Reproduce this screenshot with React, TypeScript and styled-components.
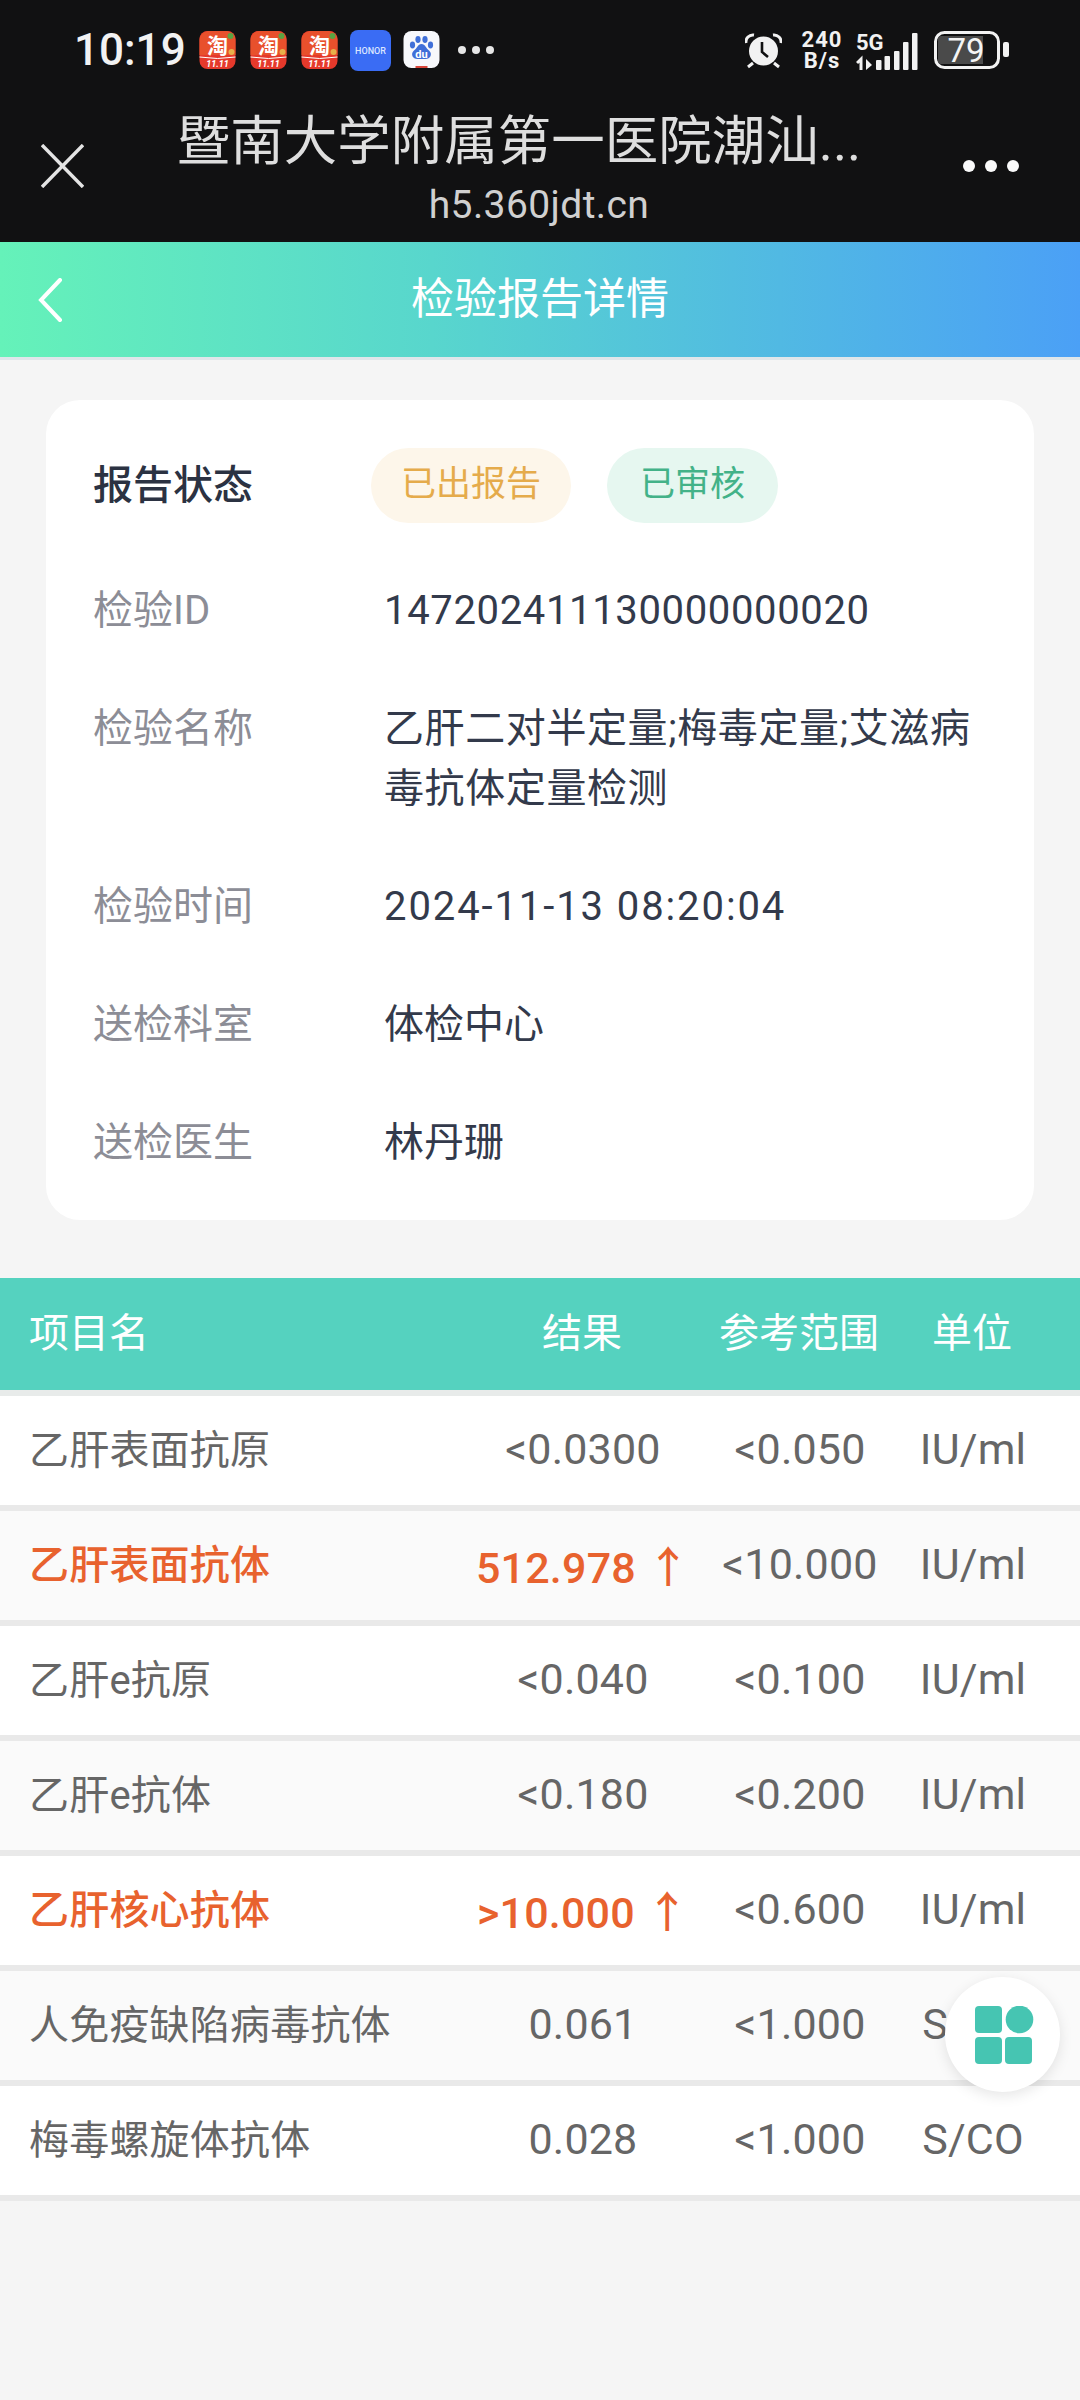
import React from "react";
import styled, { createGlobalStyle } from "styled-components";

const Global = createGlobalStyle`
  html, body { margin: 0; padding: 0; background: #f5f5f5; }
  * { box-sizing: border-box; }
  body { font-family: Roboto, "Noto Sans CJK SC", sans-serif; }
`;

const Page = styled.div`
  position: relative;
  width: 1080px;
  height: 2400px;
  overflow: hidden;
  background: #f5f5f5;
`;

const Chrome = styled.header`
  height: 242px;
  background: #111112;
`;

const StatusBar = styled.div`
  height: 100px;
  padding: 0 71px 0 74px;
  display: flex;
  align-items: center;
  color: #f2f2f2;
`;

const Clock = styled.span`
  font-size: 44px;
  font-weight: 500;
  width: 125px;
  line-height: 1;
`;

const NoticeIcons = styled.div`
  display: flex;
  align-items: center;
  gap: 14px;
`;

const AppGlyph = styled.svg`
  display: block;
  flex: none;
`;

const HonorGlyph = styled(AppGlyph)`
  margin: 0 -2px;
`;

const MoreNotices = styled.span`
  display: flex;
  gap: 6px;
  margin-left: 4px;
`;

const TinyDot = styled.i`
  width: 8px;
  height: 8px;
  border-radius: 50%;
  background: #e6e6e6;
`;

const SystemIcons = styled.div`
  margin-left: auto;
  display: flex;
  align-items: center;
`;

const Speed = styled.div`
  width: 42px;
  margin-left: 19px;
  display: flex;
  flex-direction: column;
  align-items: center;
  font-size: 22px;
  font-weight: 700;
  line-height: 21px;
  letter-spacing: 1px;
  color: #f2f2f2;
`;

const SignalGlyph = styled(AppGlyph)`
  margin-left: 13px;
`;

const BatteryGlyph = styled(AppGlyph)`
  margin-left: 16px;
`;

const NavBar = styled.div`
  height: 142px;
  display: flex;
  align-items: flex-start;
`;

const CloseBox = styled.div`
  width: 124px;
  padding: 44px 0 0 41px;
  flex: none;
`;

const NavTitles = styled.div`
  width: 812px;
  display: flex;
  flex-direction: column;
  align-items: center;
`;

const NavTitle = styled.div`
  margin: 11px 0 0 -22px;
  font-size: 53.5px;
  line-height: 62px;
  color: #dedede;
  white-space: nowrap;
`;

const NavUrl = styled.div`
  margin: 10px 0 0 18px;
  font-size: 39px;
  line-height: 44px;
  letter-spacing: 0.4px;
  color: #d0d0d0;
`;

const NavMenu = styled.div`
  display: flex;
  gap: 10px;
  padding: 60px 0 0 27px;
`;

const NavDot = styled.i`
  width: 12px;
  height: 12px;
  border-radius: 50%;
  background: #fafafa;
`;

const HeadBar = styled.div`
  height: 118px;
  border-bottom: 3px solid #dfe6ea;
  background: linear-gradient(90deg, #65f2b9 0%, #58d6cd 40%, #4ba0f6 100%);
  display: grid;
  grid-template-columns: 100px 1fr 100px;
  align-items: center;
  color: #fff;
`;

const BackBox = styled.div`
  padding: 0 0 0 37px;
  display: flex;
`;

const HeadTitle = styled.h1`
  margin: 0 0 2px;
  font-size: 43px;
  font-weight: 400;
  text-align: center;
  line-height: 56px;
`;

const Card = styled.section`
  margin: 40px 46px 0 46px;
  padding: 48px 32px 48px 47px;
  height: 820px;
  background: #fff;
  border-radius: 34px;
  display: flex;
  flex-direction: column;
  gap: 58px;
`;

const InfoRow = styled.div`
  display: grid;
  grid-template-columns: 291px 1fr;
  align-items: start;
  font-size: 40px;
  line-height: 60px;
`;

const StatusRow = styled(InfoRow)`
  align-items: center;
  height: 75px;
  margin-bottom: 0;
`;

const InfoLabel = styled.div<{ $strong?: boolean }>`
  color: ${(p) => (p.$strong ? "#2b3242" : "#8c8d96")};
  font-weight: ${(p) => (p.$strong ? 500 : 400)};
`;

const InfoValue = styled.div<{ $spacing: number }>`
  color: #333a4b;
  letter-spacing: ${(p) => p.$spacing}px;
`;

const Pills = styled.div`
  display: flex;
  gap: 36px;
  margin-left: -13px;
`;

const Pill = styled.span<{ $tone: "amber" | "green" }>`
  height: 75px;
  padding: 0 ${(p) => (p.$tone === "amber" ? 30 : 33)}px 2px;
  border-radius: 38px;
  display: flex;
  align-items: center;
  font-size: 35px;
  background: ${(p) => (p.$tone === "amber" ? "#fdf6ea" : "#e6f7f0")};
  color: ${(p) => (p.$tone === "amber" ? "#e5ab4b" : "#43b288")};
`;

const Columns = `
  display: grid;
  grid-template-columns: 434px 240px 194px 152px;
  padding-left: 29px;
  align-items: center;
`;

const TableHead = styled.div`
  ${Columns}
  margin-top: 58px;
  height: 112px;
  padding-bottom: 8px;
  background: #55d2bf;
  color: #fff;
  font-size: 40px;
`;

const HeadCell = styled.div`
  text-align: center;
  white-space: nowrap;
  margin-left: -2px;
`;

const Rows = styled.div`
  border-top: 6px solid #e8ebea;
`;

const Row = styled.div<{ $alt: boolean }>`
  ${Columns}
  height: 115px;
  padding-bottom: 8px;
  border-bottom: 6px solid #e9e9e9;
  background: ${(p) => (p.$alt ? "#fafafa" : "#fff")};
  color: #666;
  font-size: 40px;
`;

const Name = styled.div<{ $alert?: boolean }>`
  color: ${(p) => (p.$alert ? "#e8622e" : "#666")};
  font-weight: ${(p) => (p.$alert ? 500 : 400)};
  letter-spacing: 0.2px;
`;

const Cell = styled.div<{ $alert?: boolean }>`
  margin-top: 5px;
  text-align: center;
  white-space: nowrap;
  font-size: 43px;
  color: ${(p) => (p.$alert ? "#e8622e" : "#666")};
  font-weight: ${(p) => (p.$alert ? 500 : 400)};
  letter-spacing: 0.2px;
`;

const Fab = styled.button`
  position: absolute;
  left: 945px;
  top: 1977px;
  width: 115px;
  height: 115px;
  padding: 0 0 0 5px;
  border: 0;
  border-radius: 50%;
  background: #fff;
  box-shadow: 0 4px 14px rgba(0, 0, 0, 0.1);
  display: flex;
  align-items: center;
  justify-content: center;
`;

const Taobao = () => (
  <AppGlyph width="37" height="38" viewBox="0 0 36 38">
    <rect width="36" height="38" rx="8" fill="#e5392b" />
    <path d="M0 9a9 9 0 0 1 9-9h18a9 9 0 0 1 9 9v15H0z" fill="#e8502c" />
    <circle cx="31" cy="5" r="3" fill="#5aa342" />
    <circle cx="32" cy="21" r="3" fill="#e7b04a" />
    <text x="18" y="22" textAnchor="middle" fontSize="21" fontWeight="700" fill="#fff">淘</text>
    <path d="M0 26q18 3 36 0" stroke="#fff" strokeWidth="1" fill="none" />
    <text x="18" y="35.5" textAnchor="middle" fontSize="9" fontWeight="700" fontStyle="italic" fill="#fff">11.11</text>
  </AppGlyph>
);

const Honor = () => (
  <HonorGlyph width="41" height="41" viewBox="0 0 41 41">
    <rect width="41" height="41" rx="8" fill="#3a6cf4" />
    <text x="20.5" y="24" textAnchor="middle" fontSize="9" fontWeight="500" fill="#dce6ff">HONOR</text>
  </HonorGlyph>
);

const Baidu = () => (
  <AppGlyph width="37" height="38" viewBox="0 0 36 38">
    <rect width="36" height="37" rx="8" fill="#f7f8fb" />
    <g fill="#3f6fd8">
      <ellipse cx="9" cy="14" rx="2.6" ry="3.4" />
      <ellipse cx="14.5" cy="8.5" rx="2.6" ry="3.4" />
      <ellipse cx="21.5" cy="8.5" rx="2.6" ry="3.4" />
      <ellipse cx="27" cy="14" rx="2.6" ry="3.4" />
      <path d="M18 13c4 0 4 4 8 7 3 3 1 8-4 8H14c-5 0-7-5-4-8 4-3 4-7 8-7z" />
    </g>
    <text x="18" y="27" textAnchor="middle" fontSize="11" fontWeight="700" fill="#fff">du</text>
    <rect x="12" y="35" width="12" height="2" fill="#d8453a" />
  </AppGlyph>
);

const Alarm = () => (
  <AppGlyph width="37" height="38" viewBox="0 0 37 38">
    <circle cx="18.5" cy="20" r="14.5" fill="#f2f2f2" />
    <path d="M1 12a7 7 0 0 1 8-8M36 12a7 7 0 0 0-8-8" stroke="#f2f2f2" strokeWidth="3" fill="none" />
    <path d="M8 32l-5 4M29 32l5 4" stroke="#f2f2f2" strokeWidth="3" />
    <path d="M17 11v10l6 5" stroke="#111112" strokeWidth="2.6" fill="none" />
  </AppGlyph>
);

const Signal = () => (
  <SignalGlyph width="62" height="42" viewBox="0 -4 62 42">
    <text x="0" y="17" fontSize="22" fontWeight="700" fill="#f2f2f2">5G</text>
    <path d="M5 37V26l-4 4" stroke="#f2f2f2" strokeWidth="3" fill="none" />
    <path d="M10 26v11l6-5z" fill="#f2f2f2" />
    <rect x="20" y="27" width="5.5" height="10" rx="1" fill="#f2f2f2" />
    <rect x="28.5" y="23" width="5.5" height="14" rx="1" fill="#f2f2f2" />
    <rect x="38" y="18" width="5.5" height="19" rx="1" fill="#f2f2f2" />
    <rect x="47" y="9" width="5.5" height="28" rx="1" fill="#f2f2f2" />
    <rect x="56" y="0" width="5.5" height="37" rx="1" fill="#f2f2f2" />
  </SignalGlyph>
);

const Battery = () => (
  <BatteryGlyph width="75" height="38" viewBox="0 0 75 38">
    <rect x="1.5" y="1.5" width="63" height="35" rx="9" fill="none" stroke="#f2f2f2" strokeWidth="3" />
    <path d="M7 5h42v28H7a3 3 0 0 1-3-3V8a3 3 0 0 1 3-3z" fill="#4a4a4a" />
    <rect x="69" y="11" width="6" height="15" rx="2" fill="#f2f2f2" />
    <text x="32" y="31" textAnchor="middle" fontSize="33" fill="#f5f5f5">79</text>
  </BatteryGlyph>
);

const CloseIcon = () => (
  <AppGlyph width="43" height="44" viewBox="0 0 43 44">
    <path d="M1 1l41 42M42 1L1 43" stroke="#e4e4e4" strokeWidth="3.4" fill="none" />
  </AppGlyph>
);

const BackIcon = () => (
  <AppGlyph width="26" height="44" viewBox="0 0 26 44">
    <path d="M23 2L4 22l19 20" stroke="#fff" strokeWidth="4" fill="none" strokeLinecap="round" />
  </AppGlyph>
);

const AppsIcon = () => (
  <AppGlyph width="60" height="58" viewBox="0 0 60 58">
    <rect x="0" y="0" width="27" height="27" rx="4" fill="#46c5b2" />
    <circle cx="44.5" cy="13.5" r="13.8" fill="#46c5b2" />
    <rect x="0" y="31" width="27" height="27" rx="4" fill="#46c5b2" />
    <rect x="30" y="31" width="27" height="27" rx="4" fill="#46c5b2" />
  </AppGlyph>
);

const info = [
  { label: "检验ID", value: "147202411130000000020", spacing: 0.65 },
  { label: "检验名称", value: "乙肝二对半定量;梅毒定量;艾滋病毒抗体定量检测", spacing: 0.6 },
  { label: "检验时间", value: "2024-11-13 08:20:04", spacing: 1.9 },
  { label: "送检科室", value: "体检中心", spacing: 0 },
  { label: "送检医生", value: "林丹珊", spacing: 0 },
];

const results = [
  { name: "乙肝表面抗原", result: "<0.0300", range: "<0.050", unit: "IU/ml" },
  { name: "乙肝表面抗体", result: "512.978 ↑", range: "<10.000", unit: "IU/ml", alert: true },
  { name: "乙肝e抗原", result: "<0.040", range: "<0.100", unit: "IU/ml" },
  { name: "乙肝e抗体", result: "<0.180", range: "<0.200", unit: "IU/ml" },
  { name: "乙肝核心抗体", result: ">10.000 ↑", range: "<0.600", unit: "IU/ml", alert: true },
  { name: "人免疫缺陷病毒抗体", result: "0.061", range: "<1.000", unit: "S/CO" },
  { name: "梅毒螺旋体抗体", result: "0.028", range: "<1.000", unit: "S/CO" },
];

export default function App() {
  return (
    <Page>
      <Global />
      <Chrome>
        <StatusBar>
          <Clock>10:19</Clock>
          <NoticeIcons>
            <Taobao />
            <Taobao />
            <Taobao />
            <Honor />
            <Baidu />
            <MoreNotices>
              <TinyDot />
              <TinyDot />
              <TinyDot />
            </MoreNotices>
          </NoticeIcons>
          <SystemIcons>
            <Alarm />
            <Speed>
              <span>240</span>
              <span>B/s</span>
            </Speed>
            <Signal />
            <Battery />
          </SystemIcons>
        </StatusBar>
        <NavBar>
          <CloseBox>
            <CloseIcon />
          </CloseBox>
          <NavTitles>
            <NavTitle>暨南大学附属第一医院潮汕...</NavTitle>
            <NavUrl>h5.360jdt.cn</NavUrl>
          </NavTitles>
          <NavMenu>
            <NavDot />
            <NavDot />
            <NavDot />
          </NavMenu>
        </NavBar>
      </Chrome>
      <HeadBar>
        <BackBox>
          <BackIcon />
        </BackBox>
        <HeadTitle>检验报告详情</HeadTitle>
      </HeadBar>
      <Card>
        <StatusRow>
          <InfoLabel $strong>报告状态</InfoLabel>
          <Pills>
            <Pill $tone="amber">已出报告</Pill>
            <Pill $tone="green">已审核</Pill>
          </Pills>
        </StatusRow>
        {info.map((r) => (
          <InfoRow key={r.label}>
            <InfoLabel>{r.label}</InfoLabel>
            <InfoValue $spacing={r.spacing}>{r.value}</InfoValue>
          </InfoRow>
        ))}
      </Card>
      <TableHead>
        <div>项目名</div>
        <HeadCell>结果</HeadCell>
        <HeadCell>参考范围</HeadCell>
        <HeadCell>单位</HeadCell>
      </TableHead>
      <Rows>
        {results.map((r, i) => (
          <Row key={r.name} $alt={i % 2 === 1}>
            <Name $alert={r.alert}>{r.name}</Name>
            <Cell $alert={r.alert}>{r.result}</Cell>
            <Cell>{r.range}</Cell>
            <Cell>{r.unit}</Cell>
          </Row>
        ))}
      </Rows>
      <Fab aria-label="apps">
        <AppsIcon />
      </Fab>
    </Page>
  );
}
